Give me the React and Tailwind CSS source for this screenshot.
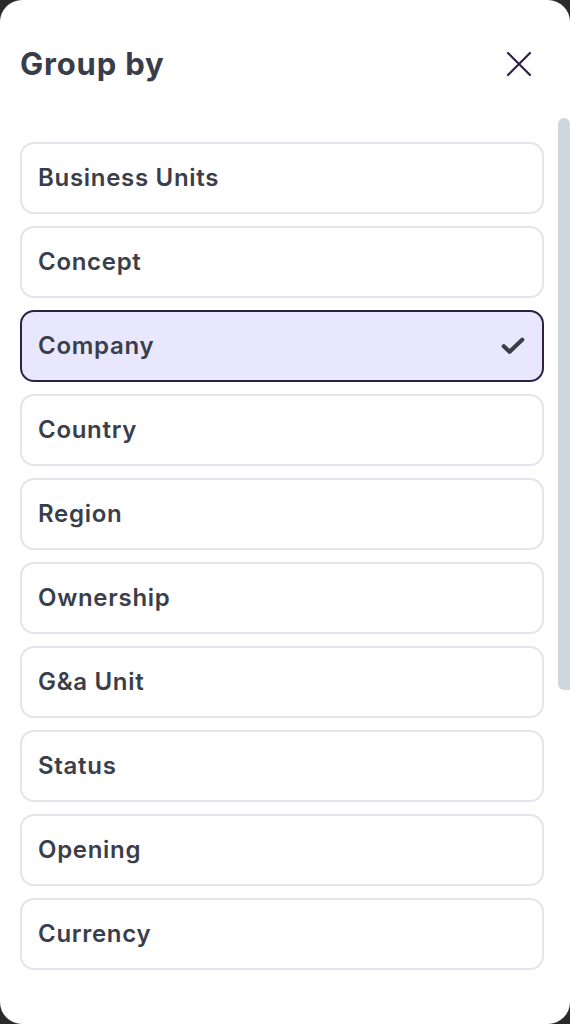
import React from "react";

const items = [
  "Business Units",
  "Concept",
  "Company",
  "Country",
  "Region",
  "Ownership",
  "G&a Unit",
  "Status",
  "Opening",
  "Currency",
];

export default function App() {
  return (
    <div className="w-[570px] h-[1024px] bg-[#2a2a2a] overflow-hidden" style={{ fontFamily: "Inter, 'Noto Sans', sans-serif" }}>
      <div className="w-full h-full bg-white rounded-[22px] flex flex-col">
        <div className="flex items-center justify-between pl-5 pr-[37px] pt-[44px] pb-[34px]">
          <h1 className="text-[31px] leading-[40px] font-bold text-[#393d4a] tracking-[0.8px]">Group by</h1>
          <svg width="28" height="28" viewBox="0 0 28 28" fill="none" stroke="#2e2147" strokeWidth="2.2" strokeLinecap="round">
            <path d="M3 3L25 25M25 3L3 25" />
          </svg>
        </div>
        <div className="flex flex-1 min-h-0">
          <div className="flex-1 flex flex-col gap-3 pl-5 pr-[14px] pt-6">
            {items.map((it) => {
              const sel = it === "Company";
              return (
                <div
                  key={it}
                  className={
                    sel
                      ? "h-[72px] shrink-0 rounded-[14px] border-2 border-[#2e2147] bg-[#e9e7fd] flex items-center justify-between pl-4 pr-[17px]"
                      : "h-[72px] shrink-0 rounded-[14px] border-2 border-[#e4e4ef] bg-white flex items-center pl-4 pr-[17px]"
                  }
                >
                  <span className="text-[24px] font-semibold text-[#3a3e4b] tracking-[0.7px]">{it}</span>
                  {sel && (
                    <svg width="24" height="18" viewBox="0 0 24 18" fill="none" stroke="#3a3e4b" strokeWidth="4.2" strokeLinecap="round" strokeLinejoin="round">
                      <path d="M2.8 9.2L8.6 14.8L21.2 2.8" />
                    </svg>
                  )}
                </div>
              );
            })}
          </div>
          <div className="w-3 shrink-0">
            <div className="h-[572px] bg-[#cdd7e0] rounded-l-[6px] rounded-tr-[6px]"></div>
          </div>
        </div>
      </div>
    </div>
  );
}
